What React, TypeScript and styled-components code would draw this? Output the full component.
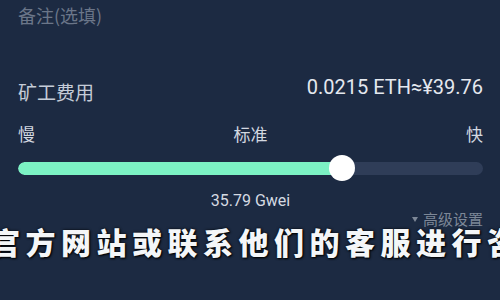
import styled, { createGlobalStyle } from "styled-components"

const GlobalStyle = createGlobalStyle`
  html, body {
    margin: 0;
    padding: 0;
    background: #1c2a42;
  }
  body {
    font-family: Roboto, "Noto Sans CJK SC", sans-serif;
  }
`

const Screen = styled.div`
  position: relative;
  width: 500px;
  height: 300px;
  overflow: hidden;
  background: #1c2a42;
`

const Panel = styled.div`
  display: flex;
  flex-direction: column;
  padding: 3px 17px 0 18px;
`

const RemarkLabel = styled.div`
  font-family: "Noto Sans CJK SC", sans-serif;
  font-size: 18px;
  line-height: 24px;
  color: #6b7689;
`

const FeeRow = styled.div`
  display: flex;
  justify-content: space-between;
  align-items: flex-start;
  margin-top: 48px;
`

const FeeLabel = styled.div`
  font-family: "Noto Sans CJK SC", sans-serif;
  font-size: 19px;
  line-height: 24px;
  padding-top: 5px;
  color: #c5ccd8;
`

const FeeValue = styled.div`
  font-family: Roboto, "Noto Sans CJK SC", sans-serif;
  font-size: 20px;
  line-height: 24px;
  color: #e4e8ef;
`

const SpeedLabels = styled.div`
  display: flex;
  justify-content: space-between;
  margin-top: 19px;
  font-family: "Noto Sans CJK SC", sans-serif;
  font-size: 17px;
  line-height: 22px;
  color: #d3d8e0;
`

const Slider = styled.div`
  position: relative;
  height: 26px;
  margin-top: 10px;
  display: flex;
  align-items: center;
`

const Track = styled.div`
  width: 100%;
  height: 13px;
  border-radius: 7px;
  background: #2f3d58;
  overflow: hidden;
`

const Fill = styled.div`
  height: 100%;
  background: #7cf2c4;
  border-radius: 7px 0 0 7px;
`

const Knob = styled.div`
  position: absolute;
  top: 0;
  width: 26px;
  height: 26px;
  margin-left: -13px;
  border-radius: 50%;
  background: #ffffff;
`

const GasPrice = styled.div`
  margin-top: 12px;
  text-align: center;
  font-family: Roboto, sans-serif;
  font-size: 16px;
  line-height: 16px;
  color: #d5dae2;
`

const Advanced = styled.div`
  display: flex;
  justify-content: flex-end;
  align-items: center;
  gap: 5px;
  font-family: "Noto Sans CJK SC", sans-serif;
  font-size: 15px;
  line-height: 20px;
  color: #7d8797;
`

const Caret = styled.span`
  width: 0;
  height: 0;
  margin-top: 1px;
  border-left: 3px solid transparent;
  border-right: 3px solid transparent;
  border-top: 5px solid #7d8797;
`

const Overlay = styled.div`
  position: absolute;
  left: -10px;
  top: 224px;
  white-space: nowrap;
  font-family: "Noto Sans CJK SC", sans-serif;
  font-weight: 900;
  font-size: 30px;
  line-height: 34px;
  letter-spacing: 5.5px;
  color: #f4f6f8;
  text-shadow: 0 0 3px rgba(0, 0, 0, 0.85), 1px 1px 2px #000;
`

const gasPercent = 69.7

export default function App() {
  return (
    <Screen>
      <GlobalStyle />
      <Panel>
        <RemarkLabel>备注(选填)</RemarkLabel>

        <FeeRow>
          <FeeLabel>矿工费用</FeeLabel>
          <FeeValue>0.0215 ETH≈¥39.76</FeeValue>
        </FeeRow>

        <SpeedLabels>
          <span>慢</span>
          <span>标准</span>
          <span>快</span>
        </SpeedLabels>

        <Slider>
          <Track>
            <Fill style={{ width: `${gasPercent}%` }} />
          </Track>
          <Knob style={{ left: `${gasPercent}%` }} />
        </Slider>

        <GasPrice>35.79 Gwei</GasPrice>

        <Advanced>
          <Caret />
          <span>高级设置</span>
        </Advanced>
      </Panel>

      <Overlay>官方网站或联系他们的客服进行咨询。</Overlay>
    </Screen>
  )
}
